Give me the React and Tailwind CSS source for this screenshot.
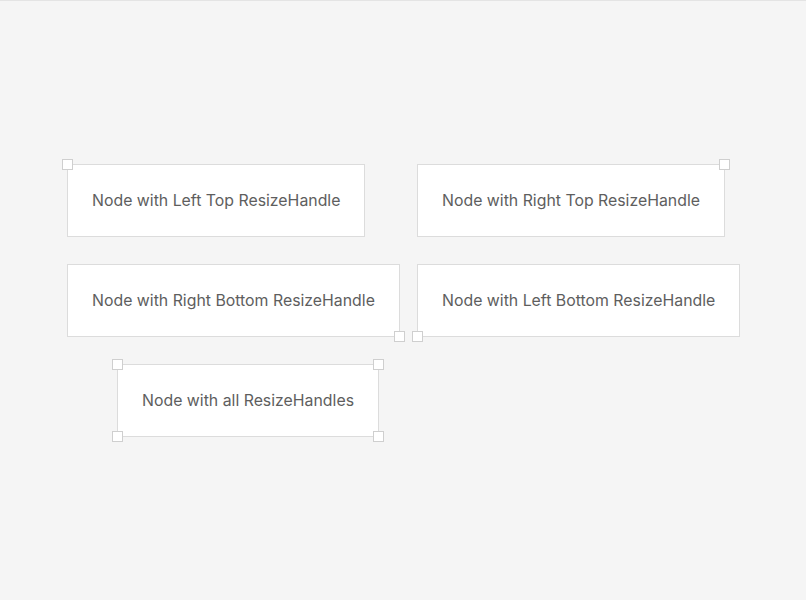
import React from 'react';

// canvas nodes: position is the content here (offsets sit under the 1px top border)
const nodes = [
    { id: 1, label: 'Node with Left Top ResizeHandle', pos: 'left-[67px] top-[163px]', handles: ['tl'] },
    { id: 2, label: 'Node with Right Top ResizeHandle', pos: 'left-[417px] top-[163px]', handles: ['tr'] },
    { id: 3, label: 'Node with Right Bottom ResizeHandle', pos: 'left-[67px] top-[263px]', handles: ['br'] },
    { id: 4, label: 'Node with Left Bottom ResizeHandle', pos: 'left-[417px] top-[263px]', handles: ['bl'] },
    { id: 5, label: 'Node with all ResizeHandles', pos: 'left-[117px] top-[363px]', handles: ['tl', 'tr', 'bl', 'br'] },
];

const handleClass = {
    tl: '-left-[6px] -top-[6px]',
    tr: '-right-[6px] -top-[6px]',
    bl: '-left-[6px] -bottom-[6px]',
    br: '-right-[6px] -bottom-[6px]',
};

const Handle = ({ pos }) => (
    <div className={`absolute w-[11px] h-[11px] bg-white border border-[#cfcfcf] ${handleClass[pos]}`} />
);

const App = () => {
    return (
        <div className="relative w-[806px] h-[600px] overflow-hidden bg-[#f5f5f5] border-t border-[#e4e4e4] font-['Inter','Noto_Sans',sans-serif]">
            {nodes.map((node) => (
                <div
                    key={node.id}
                    className={`absolute ${node.pos} bg-white border border-[#dcdcdc] px-6 py-6 text-[15.85px] text-[#5e5e5e] whitespace-nowrap`}
                >
                    <div className="h-[23px] leading-[23px]">{node.label}</div>
                    {node.handles.map((h) => <Handle key={h} pos={h} />)}
                </div>
            ))}
        </div>
    );
};

export default App;
